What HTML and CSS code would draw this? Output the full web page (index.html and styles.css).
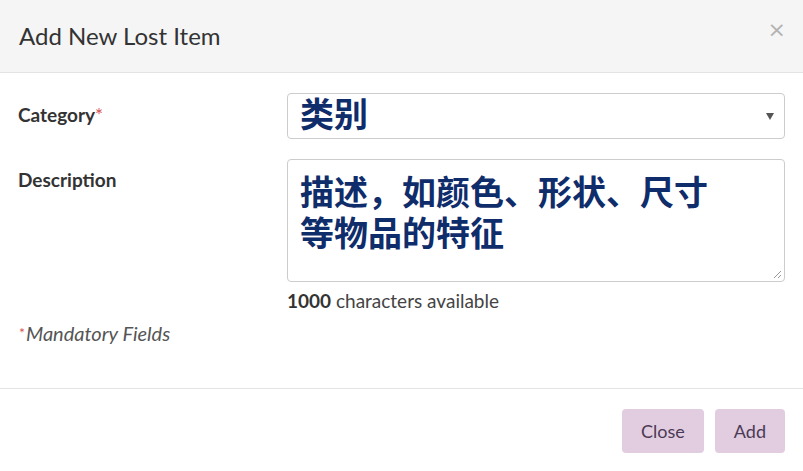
FILE: index.html
```html
<!DOCTYPE html>
<html lang="en">
<head>
<meta charset="utf-8">
<title>Add New Lost Item</title>
<link rel="stylesheet" href="styles.css">
</head>
<body>
<div class="modal">
  <div class="modal-header">
    <h4 class="modal-title">Add New Lost Item</h4>
    <button class="close" type="button" aria-label="Close">&times;</button>
  </div>
  <div class="modal-body">
    <div class="form-row">
      <label class="form-label">Category<span class="req">*</span></label>
      <div class="form-control-wrap">
        <div class="select">
          <span class="select-text">类别</span>
          <span class="select-arrow"></span>
        </div>
      </div>
    </div>
    <div class="form-row desc-row">
      <label class="form-label">Description</label>
      <div class="form-control-wrap">
        <div class="textarea">
          <span class="textarea-line">描述，如颜色、形状、尺寸</span>
          <span class="textarea-line">等物品的特征</span>
          <svg class="grip" width="9" height="9" viewBox="0 0 9 9"><path d="M8 1 L1 8 M8 5 L5 8" stroke="#999" stroke-width="1"/></svg>
        </div>
        <div class="help"><b>1000</b> characters available</div>
      </div>
    </div>
    <div class="mandatory"><span class="req">*</span>Mandatory Fields</div>
  </div>
  <div class="modal-footer">
    <button class="btn" type="button">Close</button>
    <button class="btn" type="button">Add</button>
  </div>
</div>
</body>
</html>
```
FILE: styles.css
```css
html, body {
  margin: 0;
  padding: 0;
  background: #ffffff;
}
body {
  font-family: Lato, "Noto Sans", sans-serif;
  color: #333333;
  width: 803px;
  height: 471px;
  overflow: hidden;
}
.modal {
  display: flex;
  flex-direction: column;
}
.modal-header {
  height: 72px;
  background: #f5f5f5;
  border-bottom: 1px solid #e3e3e3;
  display: flex;
  align-items: center;
  justify-content: space-between;
  padding: 0 15px 0 19px;
  box-sizing: content-box;
}
.modal-title {
  margin: 0;
  font-size: 24px;
  font-weight: 400;
  color: #333;
  position: relative;
  top: -1px;
}
.close {
  border: 0;
  background: none;
  padding: 0;
  font-family: "DejaVu Sans", sans-serif;
  font-size: 22px;
  color: #b3b3b3;
  line-height: 1;
  position: relative;
  top: -6px;
  right: 2px;
}
.modal-body {
  padding: 20px 18px 0 18px;
  height: 295px;
  border-bottom: 1px solid #e3e3e3;
}
.form-row {
  display: flex;
}
.desc-row {
  margin-top: 20px;
}
.form-label {
  width: 269px;
  flex: none;
  font-size: 19px;
  font-weight: 700;
  color: #333;
  padding-top: 10px;
}
.desc-row .form-label {
  padding-top: 9px;
}
.req {
  color: #d9534f;
  font-weight: 400;
}
.form-control-wrap {
  flex: 1;
}
.select {
  height: 44px;
  border: 1px solid #cccccc;
  border-radius: 4px;
  display: flex;
  align-items: center;
  justify-content: space-between;
  padding: 0 10px 0 12px;
}
.select-text, .textarea-line {
  font-family: "Noto Sans CJK SC", sans-serif;
  font-weight: 700;
  font-size: 34px;
  color: #0f2c6b;
}
.select-text {
  line-height: 1;
  position: relative;
  top: -3px;
}
.select-arrow {
  width: 0;
  height: 0;
  border-left: 4px solid transparent;
  border-right: 4px solid transparent;
  border-top: 7px solid #555;
}
.textarea {
  height: 121px;
  border: 1px solid #cccccc;
  border-radius: 4px;
  padding: 14px 12px 0;
  position: relative;
  box-sizing: border-box;
  height: 123px;
  display: flex;
  flex-direction: column;
  gap: 7px;
}
.textarea-line {
  display: block;
  line-height: 34px;
}
.grip {
  position: absolute;
  right: 2px;
  bottom: 2px;
}
.help {
  font-size: 19px;
  color: #444;
  margin-top: 7px;
}
.help b {
  font-weight: 700;
  color: #333;
}
.mandatory {
  font-size: 20px;
  font-style: italic;
  color: #555;
  margin-top: 9px;
  margin-left: 1px;
}
.mandatory .req {
  font-size: 14px;
  font-style: normal;
  vertical-align: 3px;
  margin-right: 1px;
}
.modal-footer {
  display: flex;
  justify-content: flex-end;
  gap: 11px;
  padding: 20px 18px 0 18px;
}
.btn {
  height: 44px;
  border: 0;
  border-radius: 4px;
  background: #e2cde0;
  color: #4b3a55;
  font-family: Lato, sans-serif;
  font-size: 18px;
  padding: 0 19px;
}
```
